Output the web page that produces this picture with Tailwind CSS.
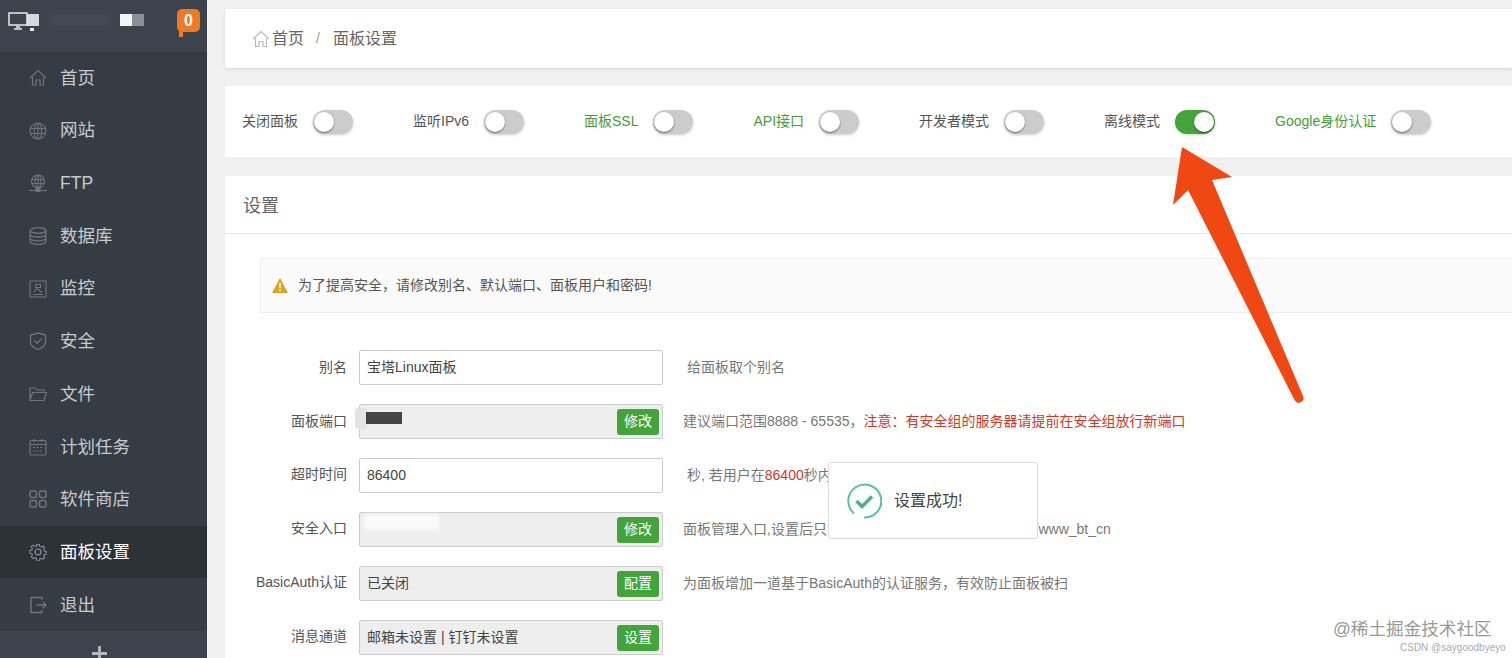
<!DOCTYPE html>
<html lang="zh-CN">
<head>
  <meta charset="UTF-8">
  <title>面板设置</title>
  <script src="https://cdn.jsdelivr.net/npm/@tailwindcss/browser@4"></script>
</head>
<body class="w-[1512px] h-[658px] overflow-hidden relative bg-[#f0f0f0] font-['Liberation_Sans','Noto_Sans_CJK_SC',sans-serif] text-[14px] text-[#555]">
  <div class="flex h-[658px]">
    <!-- 侧边栏 -->
    <aside class="w-[207px] shrink-0 h-full bg-[#363c43] flex flex-col text-[#c8cbce] text-[17.5px]">
      <div class="h-[51.5px] shrink-0 bg-[#3d434c] relative">
        <svg class="absolute left-[8px] top-[12px]" width="32" height="20" viewBox="0 0 32 20" fill="none">
          <rect x="19" y="2" width="12" height="12" fill="#d5d8dc"/>
          <rect x="1" y="1" width="18" height="12" fill="#3d434c" stroke="#e8eaec" stroke-width="1.5"/>
          <path d="M6 17h8M8 15h4" stroke="#e8eaec" stroke-width="1.5"/>
          <rect x="22" y="16" width="4" height="3" fill="#e8eaec"/>
        </svg>
        <div class="absolute left-[50px] top-[14px] w-[60px] h-[12px] bg-[#454b54] blur-[3px]"></div>
        <div class="absolute left-[120px] top-[14px] w-[12px] h-[12px] bg-[#f4f5f7]"></div>
        <div class="absolute left-[132px] top-[14px] w-[12px] h-[12px] bg-[#8b8f99]"></div>
        <div class="absolute left-[177px] top-[9px] w-[23px] h-[23px] rounded-[5px] bg-[#ee7a22] text-white text-[16px] font-bold flex items-center justify-center">0</div>
        <div class="absolute left-[179px] top-[31px] w-[4px] h-[6px] bg-[#ee7a22]"></div>
      </div>
      <nav class="flex flex-col">
        <a class="h-[52.7px] flex items-center pl-[29px] gap-[13px]">
          <svg width="18" height="18" viewBox="0 0 18 18" fill="none" stroke="#6f757c" stroke-width="1.2"><path d="M1 9 9 1.5 17 9M3.500 8v8h3.500v-5h4v5h3.500V8"/></svg>首页</a>
        <a class="h-[52.7px] flex items-center pl-[29px] gap-[13px]">
          <svg width="18" height="18" viewBox="0 0 18 18" fill="none" stroke="#6f757c" stroke-width="1.1"><circle cx="9" cy="9" r="8"/><ellipse cx="9" cy="9" rx="3.8" ry="8"/><path d="M1.500 6.500h15M1.500 11.500h15M9 1v16"/></svg>网站</a>
        <a class="h-[52.7px] flex items-center pl-[29px] gap-[13px]">
          <svg width="18" height="18" viewBox="0 0 18 18" fill="none" stroke="#6f757c" stroke-width="1.1"><circle cx="9" cy="7.500" r="6.500"/><ellipse cx="9" cy="7.500" rx="3" ry="6.500"/><path d="M3 5.500h12M3 9.500h12M9 1v13M0 16.500h18"/><rect x="7" y="14.500" width="4" height="3" fill="#6f757c"/></svg>FTP</a>
        <a class="h-[52.7px] flex items-center pl-[29px] gap-[13px]">
          <svg width="18" height="18" viewBox="0 0 18 18" fill="none" stroke="#6f757c" stroke-width="1.3"><ellipse cx="9" cy="3.500" rx="7.800" ry="2.800"/><path d="M1.200 3.500v11c0 1.600 3.500 2.800 7.800 2.800s7.800-1.200 7.800-2.800v-11M1.200 7.200c0 1.600 3.500 2.800 7.800 2.800s7.800-1.200 7.800-2.800M1.200 11c0 1.600 3.500 2.800 7.800 2.800s7.800-1.200 7.800-2.800"/></svg>数据库</a>
        <a class="h-[52.7px] flex items-center pl-[29px] gap-[13px]">
          <svg width="18" height="18" viewBox="0 0 18 18" fill="none" stroke="#6f757c" stroke-width="1.1"><rect x="1" y="1" width="16" height="16"/><path d="M4 14.500h10M5 12l3-3.500 2 1.500 3 2.500M6.500 4.500h5v3h-5z"/></svg>监控</a>
        <a class="h-[52.7px] flex items-center pl-[29px] gap-[13px]">
          <svg width="18" height="18" viewBox="0 0 18 18" fill="none" stroke="#6f757c" stroke-width="1.3"><path d="M9 1 16.500 3v7c0 3.500-3.500 6-7.500 7.500C5 16 1.500 13.500 1.500 10V3z"/><path d="m5.500 8.500 2.700 2.700 4.500-4.500"/></svg>安全</a>
        <a class="h-[52.7px] flex items-center pl-[29px] gap-[13px]">
          <svg width="18" height="18" viewBox="0 0 18 18" fill="none" stroke="#6f757c" stroke-width="1.2"><path d="M1 15.500V3h5.500l1.500 2h7v2.500M1 15.500h14L17.500 7.500H3.500z"/></svg>文件</a>
        <a class="h-[52.7px] flex items-center pl-[29px] gap-[13px]">
          <svg width="18" height="18" viewBox="0 0 18 18" fill="none" stroke="#6f757c" stroke-width="1.2"><rect x="1" y="2.500" width="16" height="14.500" rx="1.500"/><path d="M1 6.500h16M5 1v3M13 1v3"/><path d="M4 9.500h10M4 13h10" stroke-dasharray="2 1.500"/></svg>计划任务</a>
        <a class="h-[52.7px] flex items-center pl-[29px] gap-[13px]">
          <svg width="18" height="18" viewBox="0 0 18 18" fill="none" stroke="#6f757c" stroke-width="1.5"><rect x="1" y="1" width="6.500" height="6.500" rx="1.500"/><rect x="10.500" y="1" width="6.500" height="6.500" rx="1.500"/><rect x="1" y="10.500" width="6.500" height="6.500" rx="1.500"/><rect x="10.500" y="10.500" width="6.500" height="6.500" rx="1.500"/></svg>软件商店</a>
        <a class="h-[52.7px] flex items-center pl-[29px] gap-[13px] bg-[#2d3238] text-white">
          <svg width="18" height="18" viewBox="0 0 18 18" fill="none" stroke="#8d9298" stroke-width="1.2"><path d="M7.500 1h3l.5 2.300 1.700.7 2-1.200 2 2.100-1.200 2 .7 1.600 2.300.5v3l-2.300.5-.7 1.700 1.200 2-2 2-2-1.200-1.700.7-.5 2.300h-3L7 16.800 5.300 16l-2 1.200-2-2 1.200-2L1.800 11.600-.5 11V8l2.300-.5.700-1.700-1.200-2 2-2.100 2 1.200L7 3.300z" transform="translate(1.200 .6) scale(.87)"/><circle cx="9" cy="9" r="3"/></svg>面板设置</a>
        <a class="h-[52.7px] flex items-center pl-[29px] gap-[13px]">
          <svg width="18" height="18" viewBox="0 0 18 18" fill="none" stroke="#6f757c" stroke-width="1.4"><path d="M13 4V1.500H2v15h11V14M7.500 9H17M14 6l3 3-3 3"/></svg>退出</a>
      </nav>
      <div class="flex-1 bg-[#3d434c] flex justify-center items-start pt-[15px] pr-[8px]">
        <svg width="15" height="15" viewBox="0 0 16 16"><path d="M8 0v16M0 8h16" stroke="#b5b8bc" stroke-width="3"/></svg>
      </div>
    </aside>

    <!-- 主内容 -->
    <main class="flex-1 pl-[18px] pt-[9px] flex flex-col">
      <div class="h-[59px] bg-white shadow-[0_1px_3px_rgba(0,0,0,0.1)] flex items-center pl-[27px] text-[16px] text-[#666] mb-[18px]">
        <svg width="18" height="18" viewBox="0 0 18 18" fill="none" stroke="#bbb" stroke-width="1.200" class="mr-[2px]"><path d="M1 9 9 1.500 17 9M3.500 8v8.500h3.500v-5h4v5h3.500V8"/></svg>
        <span>首页</span><span class="ml-[12px] mr-[13px] text-[#999] text-[14px]">/</span><span>面板设置</span>
      </div>

      <div class="h-[71px] bg-white flex items-center pl-[17px] gap-[60px] mb-[19px]">
        <div class="flex items-center gap-[15px]"><span>关闭面板</span><span class="w-[40px] h-[24px] rounded-full bg-[#ccc] relative shadow-[0_1px_3px_rgba(0,0,0,0.2)]"><span class="absolute left-[1px] top-[2px] w-[20px] h-[20px] rounded-full bg-white shadow-[0_1px_2px_rgba(0,0,0,0.5)]"></span></span></div>
        <div class="flex items-center gap-[15px]"><span>监听IPv6</span><span class="w-[40px] h-[24px] rounded-full bg-[#ccc] relative shadow-[0_1px_3px_rgba(0,0,0,0.2)]"><span class="absolute left-[1px] top-[2px] w-[20px] h-[20px] rounded-full bg-white shadow-[0_1px_2px_rgba(0,0,0,0.5)]"></span></span></div>
        <div class="flex items-center gap-[15px]"><span class="text-[#3f9f38]">面板SSL</span><span class="w-[40px] h-[24px] rounded-full bg-[#ccc] relative shadow-[0_1px_3px_rgba(0,0,0,0.2)]"><span class="absolute left-[1px] top-[2px] w-[20px] h-[20px] rounded-full bg-white shadow-[0_1px_2px_rgba(0,0,0,0.5)]"></span></span></div>
        <div class="flex items-center gap-[15px]"><span class="text-[#3f9f38]">API接口</span><span class="w-[40px] h-[24px] rounded-full bg-[#ccc] relative shadow-[0_1px_3px_rgba(0,0,0,0.2)]"><span class="absolute left-[1px] top-[2px] w-[20px] h-[20px] rounded-full bg-white shadow-[0_1px_2px_rgba(0,0,0,0.5)]"></span></span></div>
        <div class="flex items-center gap-[15px]"><span>开发者模式</span><span class="w-[40px] h-[24px] rounded-full bg-[#ccc] relative shadow-[0_1px_3px_rgba(0,0,0,0.2)]"><span class="absolute left-[1px] top-[2px] w-[20px] h-[20px] rounded-full bg-white shadow-[0_1px_2px_rgba(0,0,0,0.5)]"></span></span></div>
        <div class="flex items-center gap-[15px]"><span>离线模式</span><span class="w-[40px] h-[24px] rounded-full bg-[#43a43a] relative shadow-[0_1px_3px_rgba(0,0,0,0.2)]"><span class="absolute right-[1px] top-[2px] w-[20px] h-[20px] rounded-full bg-white shadow-[0_1px_2px_rgba(0,0,0,0.5)]"></span></span></div>
        <div class="flex items-center gap-[15px]"><span class="text-[#3f9f38]">Google身份认证</span><span class="w-[40px] h-[24px] rounded-full bg-[#ccc] relative shadow-[0_1px_3px_rgba(0,0,0,0.2)]"><span class="absolute left-[1px] top-[2px] w-[20px] h-[20px] rounded-full bg-white shadow-[0_1px_2px_rgba(0,0,0,0.5)]"></span></span></div>
      </div>

      <section class="flex-1 bg-white">
        <div class="h-[58px] border-b border-[#e8e8e8] flex items-center pl-[18px] pt-[3px] text-[18px] text-[#666]">设置</div>
        <div class="pl-[35px] pt-[24px]">
          <div class="h-[55px] bg-[#fafafa] border border-[#eee] border-r-0 flex items-center pl-[11px] text-[#555] mb-[37px]">
            <svg width="16" height="15" viewBox="0 0 16 15" class="mr-[10px]"><path d="M8 0 16 15H0z" fill="#e5a020"/><path d="M8 5v5M8 11.200v1.800" stroke="#fff" stroke-width="1.600"/></svg>
            为了提高安全，请修改别名、默认端口、面板用户和密码!
          </div>

          <div class="flex flex-col gap-[19px]">
            <div class="flex items-center h-[35px]">
              <label class="w-[87px] flex justify-end whitespace-nowrap text-[#555]">别名</label>
              <div class="ml-[12px] w-[304px] h-[35px] border border-[#ccc] rounded-[2px] flex items-center pl-[7px] text-[#444]">宝塔Linux面板</div>
              <p class="ml-[24px] text-[#777]">给面板取个别名</p>
            </div>
            <div class="flex items-center h-[35px]">
              <label class="w-[87px] flex justify-end whitespace-nowrap text-[#555]">面板端口</label>
              <div class="ml-[12px] w-[304px] h-[35px] border border-[#ccc] rounded-[2px] bg-[#eee] flex items-center justify-between pl-[7px] pr-[3px] text-[#444] relative">
                <span class="absolute left-[-5px] top-[3px] w-[12px] h-[21px] bg-[#e4e4e4] rounded-[3px]"></span>
                <span class="absolute left-[6px] top-[7px] w-[36px] h-[12px] bg-[#444]"></span>
                <span></span>
                <button class="w-[42px] h-[26px] rounded-[3px] bg-[#43a43a] text-white">修改</button>
              </div>
              <p class="ml-[20px] text-[#777]">建议端口范围8888 - 65535，<span class="text-[#d8361f]">注意：有安全组的服务器请提前在安全组放行新端口</span></p>
            </div>
            <div class="flex items-center h-[35px]">
              <label class="w-[87px] flex justify-end whitespace-nowrap pb-[3px] text-[#555]">超时时间</label>
              <div class="ml-[12px] w-[304px] h-[35px] border border-[#ccc] rounded-[2px] flex items-center pl-[7px] text-[#444]">86400</div>
              <p class="ml-[24px] text-[#777]">秒, 若用户在<span class="text-[#d8361f]">86400</span>秒内未操作面板，将自动退出面板</p>
            </div>
            <div class="flex items-center h-[35px]">
              <label class="w-[87px] flex justify-end whitespace-nowrap pb-[3px] text-[#555]">安全入口</label>
              <div class="ml-[12px] w-[304px] h-[35px] border border-[#ccc] rounded-[2px] bg-[#eee] flex items-center justify-between pl-[7px] pr-[3px] relative">
                <span class="absolute left-[4px] top-[2px] w-[75px] h-[15px] bg-[#fafafa] blur-[2px]"></span>
                <span></span>
                <button class="w-[42px] h-[26px] rounded-[3px] bg-[#43a43a] text-white">修改</button>
              </div>
              <p class="ml-[20px] text-[#777]">面板管理入口,设置后只能通过指定安全入口登录面板,如: /www_bt_cn</p>
            </div>
            <div class="flex items-center h-[35px]">
              <label class="w-[87px] flex justify-end whitespace-nowrap pb-[3px] text-[#555]">BasicAuth认证</label>
              <div class="ml-[12px] w-[304px] h-[35px] border border-[#ccc] rounded-[2px] bg-[#eee] flex items-center justify-between pl-[7px] pr-[3px] text-[#444]">
                <span>已关闭</span>
                <button class="w-[42px] h-[26px] rounded-[3px] bg-[#43a43a] text-white">配置</button>
              </div>
              <p class="ml-[20px] text-[#777]">为面板增加一道基于BasicAuth的认证服务，有效防止面板被扫</p>
            </div>
            <div class="flex items-center h-[35px]">
              <label class="w-[87px] flex justify-end whitespace-nowrap pb-[3px] text-[#555]">消息通道</label>
              <div class="ml-[12px] w-[304px] h-[35px] border border-[#ccc] rounded-[2px] bg-[#eee] flex items-center justify-between pl-[7px] pr-[3px] text-[#444]">
                <span>邮箱未设置 | 钉钉未设置</span>
                <button class="w-[42px] h-[26px] rounded-[3px] bg-[#43a43a] text-white">设置</button>
              </div>
            </div>
          </div>
        </div>
      </section>
    </main>
  </div>

  <!-- 提示框 -->
  <div class="absolute left-[828px] top-[462px] w-[210px] h-[77px] bg-white border border-[#ddd] rounded-[2px] flex items-center pl-[17px] text-[16px] text-[#444]">
    <svg width="36" height="36" viewBox="0 0 36 36" fill="none" class="mr-[12px]">
      <path d="M8 30.500A16.500 16.500 0 1 1 18 34.500" stroke="#5cbf9f" stroke-width="2"/>
      <path d="m10.500 18 5.500 5.500L26 13.500" stroke="#4fae8e" stroke-width="3.500"/>
    </svg>
    设置成功!
  </div>

  <!-- 红色箭头 -->
  <svg class="absolute left-0 top-0 pointer-events-none" width="1512" height="658" viewBox="0 0 1512 658">
    <path d="M1182 147 1232 177 1212 180 1303 396Q1305 401 1300 402.500 1296 403.500 1294 399L1188 190 1173 205Z" fill="#ef4813"/>
  </svg>

  <!-- 水印 -->
  <div class="absolute left-[1333px] top-[616px] text-[17.6px] text-[#999] whitespace-nowrap">@稀土掘金技术社区</div>
  <div class="absolute left-[1400px] top-[640px] text-[10px] text-[#aaa] whitespace-nowrap">CSDN @saygoodbyeyo</div>
</body>
</html>
